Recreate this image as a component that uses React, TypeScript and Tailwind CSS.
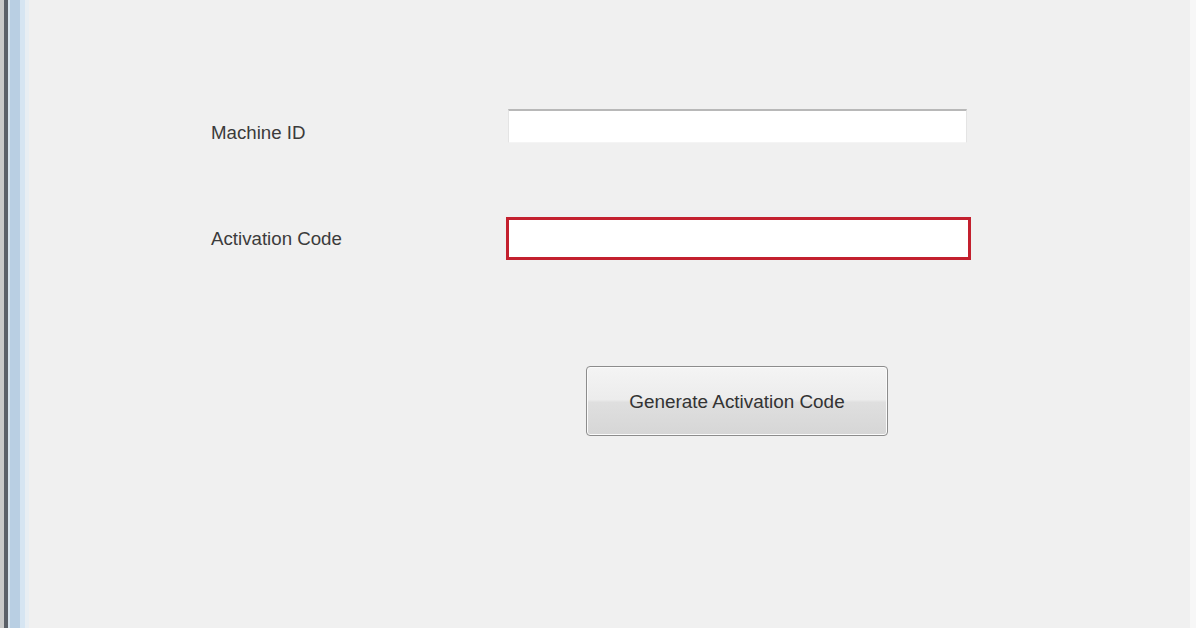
import React from 'react';

// Activation dialog: machine id + activation code fields and a generate button
export default function App() {
  return (
    <div className="flex h-[628px] w-[1196px] overflow-hidden bg-[#f0f0f0] font-['Liberation_Sans',Arial,sans-serif]">
      {/* Window frame on the left */}
      <div className="flex h-full shrink-0" aria-hidden="true">
        <div className="w-[4px] bg-[#c9c9c9]" />
        <div className="w-[4px] bg-[#5b6068]" />
        <div className="w-[2px] bg-[#d8e4ee]" />
        <div className="w-[10px] bg-[#b9cfe3]" />
        <div className="w-[5px] bg-[#d6e5f2]" />
        <div className="w-[4px] bg-[#e8eef3]" />
      </div>

      <div className="flex flex-1 flex-col pl-[182px] pt-[109px]">
        {/* Machine ID */}
        <div className="flex h-[34px] items-center">
          <label className="w-[297px] pt-[15px] text-[18.7px] text-[#3b3b3b]">Machine ID</label>
          <input
            type="text"
            className="h-[34px] w-[459px] border-t-2 border-x border-b border-t-[#b8b8b8] border-x-[#e4e4e4] border-b-[#f4f4f4] bg-white outline-none"
          />
        </div>

        {/* Activation Code */}
        <div className="mt-[74px] flex h-[43px] items-center">
          <label className="w-[295px] pt-[2px] text-[18.7px] text-[#3b3b3b]">Activation Code</label>
          <input
            type="text"
            className="h-[43px] w-[465px] border-[3px] border-[#c3202e] bg-white outline-none"
          />
        </div>

        {/* Generate button */}
        <div className="ml-[375px] mt-[106px]">
          <button
            type="button"
            className="flex h-[70px] w-[302px] items-center justify-center rounded-[4px] border border-[#8c8c8c] bg-[linear-gradient(to_bottom,#f4f4f4_0%,#ececec_48%,#dfdfdf_52%,#d6d6d6_100%)] pt-[2px] text-[18.9px] text-[#333] shadow-[inset_0_0_0_1px_#fbfbfb]"
          >
            Generate Activation Code
          </button>
        </div>
      </div>

      {/* Right edge highlight */}
      <div className="h-full w-[6px] shrink-0 bg-[#f7f7f7]" aria-hidden="true" />
    </div>
  );
}
